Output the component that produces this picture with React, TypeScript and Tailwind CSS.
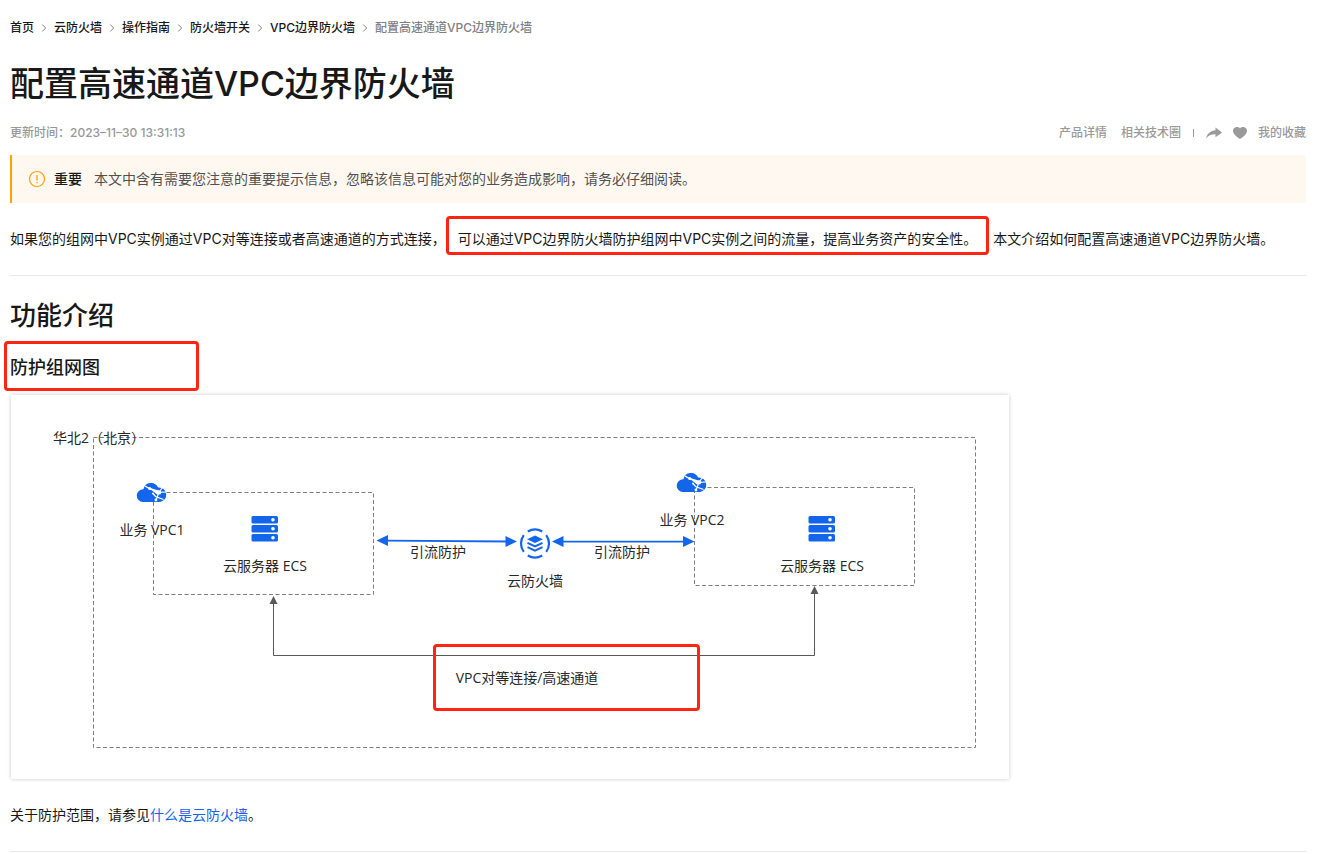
import React from "react";

const crumbs = ["首页", "云防火墙", "操作指南", "防火墙开关", "VPC边界防火墙"];

const mark = "pointer-events-none absolute rounded-sm border-3 border-[#ff2414]";

function Cloud({ x, y }: { x: number; y: number }) {
  return (
    <g transform={`translate(${x} ${y})`}>
      <path
        d="M6.4 20A6.4 6.4 0 0 1 6.9 7.2 7.8 7.8 0 0 1 21.6 5.6 7.2 7.2 0 0 1 23.4 20Z"
        fill="#1366ec"
      />
      <path
        d="M8.500 4 13 6.600 22.400 10.400 29.500 10M22.400 10.400 26 5.500M22.400 10.400 19.500 18.500M16.500 11.500 19 14.500 27 17.500"
        stroke="#fff"
        strokeWidth="1.2"
        fill="none"
      />
      <path d="M12 5.500 22 8.500 24.500 11 20.500 12.500Z" fill="#fff" />
      <circle cx="22.4" cy="10.4" r="2.2" fill="#fff" />
      <circle cx="13.2" cy="6.6" r="1.5" fill="#fff" />
      <circle cx="19.4" cy="18" r="1.4" fill="#fff" />
      <circle cx="16.500" cy="11.500" r="1" fill="#fff" />
    </g>
  );
}

function Server({ x, y }: { x: number; y: number }) {
  return (
    <g transform={`translate(${x} ${y})`}>
      {[0, 9, 18].map((top) => (
        <g key={top}>
          <rect y={top} width="26.500" height="7.500" rx="1.5" fill="#1366ec" />
          <circle cx="21.500" cy={top + 3.75} r="1.8" fill="#fff" />
        </g>
      ))}
    </g>
  );
}

function Firewall() {
  return (
    <g transform="translate(535 543.5)">
      <circle r="14" fill="#fff" />
      <path
        d="M-7.2 -12A14 14 0 0 1 7.2 -12M-7.2 12A14 14 0 0 0 7.2 12M-11.2 -8.4A14 14 0 0 0 -11.2 8.4M11.2 -8.4A14 14 0 0 1 11.2 8.4"
        fill="none"
        stroke="#1366ec"
        strokeWidth="2.2"
      />
      <path d="M0 -8 8 -4.2 0 -.4-8 -4.2Z" fill="#1366ec" />
      <path d="M-7.5 -.6 0 3 7.5 -.6M-7.5 3.6 0 7.2 7.5 3.6" fill="none" stroke="#1366ec" strokeWidth="2" />
    </g>
  );
}

function Label({ className, children }: { className: string; children: React.ReactNode }) {
  return (
    <span
      className={`absolute -translate-x-1/2 -translate-y-1/2 text-sm whitespace-nowrap text-[#282828] font-['Open_Sans','Noto_Sans_CJK_SC',sans-serif] ${className}`}
    >
      {children}
    </span>
  );
}

function Diagram() {
  return (
    <figure className="relative ml-px h-96 w-[998px] bg-white shadow-[0_0_4px_rgba(0,0,0,0.22)]">
      <svg className="absolute inset-0" width="998" height="384" viewBox="11 395 998 384" aria-hidden="true">
        <g fill="none" stroke="#808080" strokeDasharray="4 2.5">
          <path d="M93.500 437.5H975.5V747.5H93.500Z" />
          <path d="M153.500 492.500H373.500V594.500H153.500Z" />
          <path d="M694.500 487.500H914.500V585.500H694.500Z" />
        </g>
        <path d="M273.500 600V655.500H814.500V590" fill="none" stroke="#595959" />
        <path d="M273.500 596 277.500 604H269.500ZM814.500 586 818.500 594H810.500Z" fill="#595959" />
        <path d="M386 540.700 508 541.500M562 541.700H685" stroke="#1366ec" strokeWidth="1.8" />
        <path
          d="M376.500 540.500 388 535V546ZM517 541.500 505.500 536V547ZM552 541.500 563.500 536V547ZM694.500 541.500 683 536V547Z"
          fill="#1366ec"
        />
        <Cloud x={136.500} y={482} />
        <Cloud x={676.500} y={472} />
        <Server x={251.500} y={516} />
        <Server x={808.500} y={516} />
        <Firewall />
      </svg>
      <Label className="left-[88px] top-[43px]">华北2（北京）</Label>
      <Label className="left-[141px] top-[135px]">业务 VPC1</Label>
      <Label className="left-[681px] top-[125px]">业务 VPC2</Label>
      <Label className="left-[254px] top-[171px]">云服务器 ECS</Label>
      <Label className="left-[811px] top-[171px]">云服务器 ECS</Label>
      <Label className="left-[427px] top-[157px]">引流防护</Label>
      <Label className="left-[611px] top-[157px]">引流防护</Label>
      <Label className="left-[524px] top-[186px]">云防火墙</Label>
      <Label className="left-[516px] top-[283px]">VPC对等连接/高速通道</Label>
      <span className={`${mark} left-[422px] top-[249px] h-[67px] w-[267px]`} />
    </figure>
  );
}

export default function App() {
  return (
    <main className="bg-white pt-5 pr-[11px] pl-2.5 font-['Inter','Noto_Sans_CJK_SC',sans-serif] text-[#181818]">
      <nav aria-label="面包屑" className="flex h-4 items-center text-xs font-medium">
        {crumbs.map((name) => (
          <React.Fragment key={name}>
            <a href="#" className="whitespace-nowrap">{name}</a>
            <svg className="mx-[7px]" width="6" height="8" viewBox="0 0 6 8" aria-hidden="true">
              <path d="M1.200 .5 4.700 4 1.200 7.500" fill="none" stroke="#808080" />
            </svg>
          </React.Fragment>
        ))}
        <span className="whitespace-nowrap text-[#808080]">配置高速通道VPC边界防火墙</span>
      </nav>

      <h1 className="mt-6 text-[34px] leading-12 font-medium">配置高速通道VPC边界防火墙</h1>

      <div className="mt-[17px] flex h-4 items-center justify-between text-xs font-medium text-[#999]">
        <span>更新时间：2023–11–30 13:31:13</span>
        <div className="flex items-center">
          <a href="#">产品详情</a>
          <a href="#" className="ml-3.5">相关技术圈</a>
          <span className="ml-3 h-2 w-px bg-[#999]" />
          <button type="button" aria-label="分享" className="ml-3">
            <svg width="16" height="12" viewBox="0 0 16 12" className="block">
              <path d="M9.500 .5 16 5.500 9.500 10.200V7.300C5 7.200 2.500 8.500 0 11.500 1.300 6.500 4.500 3.700 9.500 3.300Z" fill="#999" />
            </svg>
          </button>
          <button type="button" className="ml-[11px] flex items-center gap-[11px]">
            <svg width="14" height="12" viewBox="0 0 14 12" aria-hidden="true">
              <path d="M7 12C5.500 11 0 7.500 0 3.700 0 .3 4.800-1.300 7 1.500 9.200-1.300 14 .3 14 3.700 14 7.500 8.500 11 7 12Z" fill="#999" />
            </svg>
            我的收藏
          </button>
        </div>
      </div>

      <aside className="mt-3.5 flex h-12 items-center border-l-2 border-[#ffa003] bg-[#fff8f0] pl-4 text-sm">
        <svg width="18" height="18" viewBox="0 0 18 18" fill="none" stroke="#ffa003" aria-hidden="true">
          <circle cx="9" cy="9" r="7.500" strokeWidth="1.200" />
          <path d="M9 5V10.500M9 12V13.300" strokeWidth="1.300" />
        </svg>
        <strong className="ml-2 font-medium">重要</strong>
        <span className="ml-3 text-[#505050]">本文中含有需要您注意的重要提示信息，忽略该信息可能对您的业务造成影响，请务必仔细阅读。</span>
      </aside>

      <p className="mt-6 text-sm leading-6">
        如果您的组网中VPC实例通过VPC对等连接或者高速通道的方式连接，
        <span className="relative mr-1 px-3">
          可以通过VPC边界防火墙防护组网中VPC实例之间的流量，提高业务资产的安全性。
          <span className={`${mark} inset-x-0 -top-3.5 -bottom-2`} />
        </span>
        本文介绍如何配置高速通道VPC边界防火墙。
      </p>

      <hr className="mt-6 border-[#e8e8e8]" />

      <h2 className="mt-5 text-[26px] leading-10 font-medium">功能介绍</h2>
      <h3 className="relative mt-[18px] text-lg leading-7 font-medium">
        防护组网图
        <span className={`${mark} -left-1.5 -top-[13px] h-[50px] w-[195px]`} />
      </h3>
      <div className="mt-[13px]">
        <Diagram />
      </div>

      <p className="mt-6 text-sm leading-6">
        关于防护范围，请参见<a href="#" className="text-[#1366ec]">什么是云防火墙</a>。
      </p>
      <hr className="mt-6 border-[#e8e8e8]" />
    </main>
  );
}
